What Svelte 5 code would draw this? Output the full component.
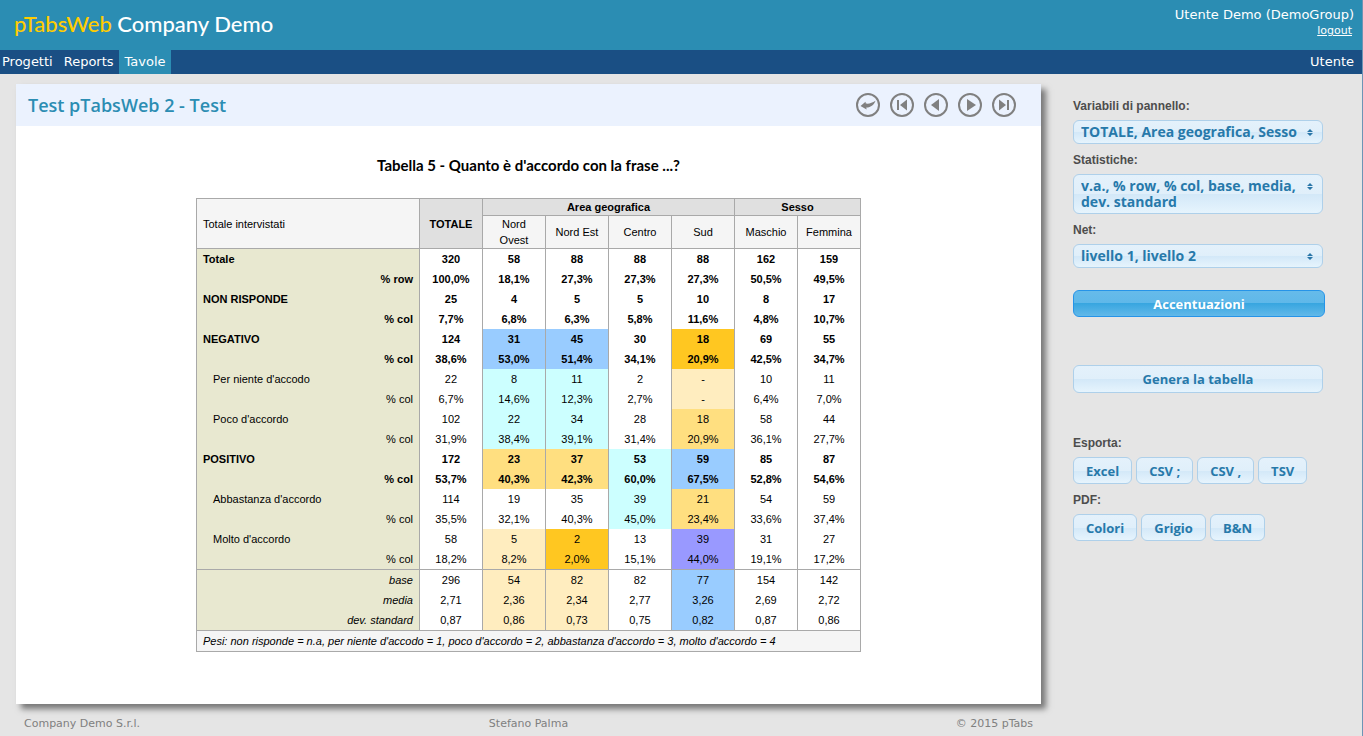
<script lang="ts">
  type Row = {
    label: string;
    kind?: 'net' | 'item' | 'stat' | 'statnet';
    cells: string[];
    tones?: string[];
  };

  const areas = ['Nord Ovest', 'Nord Est', 'Centro', 'Sud'];
  const sexes = ['Maschio', 'Femmina'];

  // One tone per column, '' where the value is not accentuated
  const negativo = ['', 'up2', 'up2', '', 'down3', '', ''];
  const niente = ['', 'up1', 'up1', '', 'down1', '', ''];
  const poco = ['', 'up1', 'up1', '', 'down2', '', ''];
  const positivo = ['', 'down2', 'down2', 'up1', 'up2', '', ''];
  const abbastanza = ['', '', '', 'up1', 'down2', '', ''];
  const molto = ['', 'down1', 'down3', '', 'up3', '', ''];
  const means = ['', 'down1', 'down1', '', 'up2', '', ''];

  const rows: Row[] = [
    { label: 'Totale', kind: 'net', cells: ['320', '58', '88', '88', '88', '162', '159'] },
    { label: '% row', kind: 'statnet', cells: ['100,0%', '18,1%', '27,3%', '27,3%', '27,3%', '50,5%', '49,5%'] },
    { label: 'NON RISPONDE', kind: 'net', cells: ['25', '4', '5', '5', '10', '8', '17'] },
    { label: '% col', kind: 'statnet', cells: ['7,7%', '6,8%', '6,3%', '5,8%', '11,6%', '4,8%', '10,7%'] },
    { label: 'NEGATIVO', kind: 'net', cells: ['124', '31', '45', '30', '18', '69', '55'], tones: negativo },
    { label: '% col', kind: 'statnet', cells: ['38,6%', '53,0%', '51,4%', '34,1%', '20,9%', '42,5%', '34,7%'], tones: negativo },
    { label: "Per niente d'accodo", kind: 'item', cells: ['22', '8', '11', '2', '-', '10', '11'], tones: niente },
    { label: '% col', kind: 'stat', cells: ['6,7%', '14,6%', '12,3%', '2,7%', '-', '6,4%', '7,0%'], tones: niente },
    { label: "Poco d'accordo", kind: 'item', cells: ['102', '22', '34', '28', '18', '58', '44'], tones: poco },
    { label: '% col', kind: 'stat', cells: ['31,9%', '38,4%', '39,1%', '31,4%', '20,9%', '36,1%', '27,7%'], tones: poco },
    { label: 'POSITIVO', kind: 'net', cells: ['172', '23', '37', '53', '59', '85', '87'], tones: positivo },
    { label: '% col', kind: 'statnet', cells: ['53,7%', '40,3%', '42,3%', '60,0%', '67,5%', '52,8%', '54,6%'], tones: positivo },
    { label: "Abbastanza d'accordo", kind: 'item', cells: ['114', '19', '35', '39', '21', '54', '59'], tones: abbastanza },
    { label: '% col', kind: 'stat', cells: ['35,5%', '32,1%', '40,3%', '45,0%', '23,4%', '33,6%', '37,4%'], tones: abbastanza },
    { label: "Molto d'accordo", kind: 'item', cells: ['58', '5', '2', '13', '39', '31', '27'], tones: molto },
    { label: '% col', kind: 'stat', cells: ['18,2%', '8,2%', '2,0%', '15,1%', '44,0%', '19,1%', '17,2%'], tones: molto }
  ];

  const summary: Row[] = [
    { label: 'base', cells: ['296', '54', '82', '82', '77', '154', '142'], tones: means },
    { label: 'media', cells: ['2,71', '2,36', '2,34', '2,77', '3,26', '2,69', '2,72'], tones: means },
    { label: 'dev. standard', cells: ['0,87', '0,86', '0,73', '0,75', '0,82', '0,87', '0,86'], tones: means }
  ];

  const pager = [
    { label: 'Indietro', d: 'M4.5 13 L9.5 8.7 L9.8 10.5 C13 11 16 10 19.5 7.8 C18.5 11.5 15 14.5 10.3 14.6 L10.6 16.4 Z' },
    { label: 'Prima tavola', d: 'M7 7h2v10h-2z M17 6.5v11l-7-5.5z' },
    { label: 'Tavola precedente', d: 'M15 6v12l-8-6z' },
    { label: 'Tavola successiva', d: 'M9 6v12l9-6z' },
    { label: 'Ultima tavola', d: 'M15 7h2v10h-2z M7 6.5v11l7-5.5z' }
  ];

  const pickers = [
    { id: 'panel-vars', label: 'Variabili di pannello:', value: 'TOTALE, Area geografica, Sesso' },
    { id: 'stats', label: 'Statistiche:', value: 'v.a., % row, % col, base, media, dev. standard' },
    { id: 'net', label: 'Net:', value: 'livello 1, livello 2' }
  ];
</script>

<div class="page">
  <header class="banner">
    <h1><span class="brand">pTabsWeb</span> Company Demo</h1>
    <div class="user">
      <span>Utente Demo (DemoGroup)</span>
      <a href="#logout">logout</a>
    </div>
  </header>

  <nav class="menu">
    <a href="#progetti">Progetti</a>
    <a href="#reports">Reports</a>
    <a href="#tavole" class="active" aria-current="page">Tavole</a>
    <a href="#utente" class="right">Utente</a>
  </nav>

  <div class="columns">
    <div class="content">
      <main class="sheet">
        <div class="sheet-head">
          <h2>Test pTabsWeb 2 - Test</h2>
          <div class="pager">
            {#each pager as p}
              <button type="button" aria-label={p.label}>
                <svg viewBox="0 0 24 24" width="24" height="24" fill="#808080">
                  <circle cx="12" cy="12" r="11" fill="none" stroke="#808080" stroke-width="2" />
                  <path d={p.d} />
                </svg>
              </button>
            {/each}
          </div>
        </div>

        <h3>Tabella 5 - Quanto è d'accordo con la frase ...?</h3>

        {#snippet line(row: Row)}
          <tr class={row.kind}>
            <th scope="row">{row.label}</th>
            {#each row.cells as cell, i}
              <td class={row.tones?.[i]}>{cell}</td>
            {/each}
          </tr>
        {/snippet}

        <table>
          <colgroup>
            <col class="label-col" />
            <col span="7" class="value-col" />
          </colgroup>
          <thead>
            <tr>
              <th rowspan="2" class="corner">Totale intervistati</th>
              <th rowspan="2" class="group">TOTALE</th>
              <th colspan="4" class="group">Area geografica</th>
              <th colspan="2" class="group">Sesso</th>
            </tr>
            <tr>
              {#each [...areas, ...sexes] as name}
                <th>{name}</th>
              {/each}
            </tr>
          </thead>
          <tbody>
            {#each rows as row}
              {@render line(row)}
            {/each}
          </tbody>
          <tbody class="summary">
            {#each summary as row}
              {@render line(row)}
            {/each}
          </tbody>
          <tfoot>
            <tr>
              <td colspan="8">Pesi: non risponde = n.a, per niente d'accodo = 1, poco d'accordo = 2, abbastanza d'accordo = 3, molto d'accordo = 4</td>
            </tr>
          </tfoot>
        </table>
      </main>

      <footer>
        <span>Company Demo S.r.l.</span>
        <span>Stefano Palma</span>
        <span>© 2015 pTabs</span>
      </footer>
    </div>

    <aside>
      {#each pickers as p}
        <label for={p.id}>{p.label}</label>
        <div class="picker">
          <select id={p.id}>
            <option>{p.value}</option>
          </select>
          <svg viewBox="0 0 6 7" width="6" height="7" fill="#2a76a8" aria-hidden="true">
            <path d="M3 0 L6 3 H0 Z M0 4 H6 L3 7 Z" />
          </svg>
        </div>
      {/each}

      <button type="button" class="btn primary">Accentuazioni</button>
      <button type="button" class="btn wide">Genera la tabella</button>

      <p>Esporta:</p>
      <div class="row">
        <button type="button" class="btn">Excel</button>
        <button type="button" class="btn">CSV ;</button>
        <button type="button" class="btn">CSV ,</button>
        <button type="button" class="btn">TSV</button>
      </div>
      <p>PDF:</p>
      <div class="row">
        <button type="button" class="btn">Colori</button>
        <button type="button" class="btn">Grigio</button>
        <button type="button" class="btn">B&amp;N</button>
      </div>
    </aside>
  </div>
</div>

<style>
  :global(body) {
    margin: 0;
    background: #e5e5e5;
  }

  .page {
    box-sizing: border-box;
    min-height: 100vh;
    border-right: 1px solid #6d94b5;
    font-family: Verdana, 'DejaVu Sans', sans-serif;
    font-size: 13px;
  }

  h1,
  h2,
  h3,
  p {
    margin: 0;
  }

  .banner {
    display: flex;
    justify-content: space-between;
    height: 50px;
    background: #2b8db3;
    color: #fff;
  }

  h1 {
    padding-left: 14px;
    font: 500 22px/48px 'Trebuchet MS', Lato, sans-serif;
  }

  .brand {
    color: #fc0;
  }

  .user {
    display: flex;
    flex-direction: column;
    align-items: flex-end;
    padding: 6px 8px 0 0;
    line-height: 18px;
  }

  .user a {
    padding-right: 2px;
    color: #fff;
    font-size: 11px;
    line-height: 14px;
  }

  .menu {
    display: flex;
    height: 24px;
    background: #1a4f84;
    line-height: 24px;
  }

  .menu a {
    padding: 0 5px 0 6px;
    color: #fff;
    text-decoration: none;
  }

  .menu a:first-child {
    padding-left: 2px;
  }

  .menu .active {
    background: #2b8db3;
  }

  .menu .right {
    margin-left: auto;
    padding-right: 8px;
  }

  .columns {
    display: grid;
    grid-template-columns: minmax(0, 1fr) 252px;
    gap: 32px;
    padding: 10px 37px 0 16px;
  }

  .sheet {
    padding-bottom: 52px;
    background: #fff;
    box-shadow: 5px 5px 6px #777;
  }

  .sheet-head {
    display: flex;
    align-items: center;
    justify-content: space-between;
    height: 42px;
    padding: 0 25px 0 12px;
    background: #ebf2fe;
  }

  h2 {
    color: #2b8db3;
    font: 600 18px/40px 'Trebuchet MS', 'Open Sans', sans-serif;
  }

  .pager {
    display: flex;
    gap: 10px;
  }

  .pager button {
    display: block;
    padding: 0;
    border: none;
    background: none;
    cursor: pointer;
  }

  .pager svg {
    display: block;
  }

  h3 {
    padding: 29px 0 23px;
    text-align: center;
    font: 700 15px/20px 'Trebuchet MS', Lato, sans-serif;
  }

  table {
    width: 665px;
    margin: 0 auto;
    border: 1px solid #a9a9a9;
    border-collapse: collapse;
    table-layout: fixed;
    font: 11px/16px Arial, 'Liberation Sans', sans-serif;
  }

  .label-col {
    width: 223px;
  }

  .value-col {
    width: 63px;
  }

  th,
  td {
    padding: 2px 6px;
    border: solid #a9a9a9;
    border-width: 0 1px;
    font-weight: 400;
    text-align: center;
  }

  thead th {
    padding: 0 6px;
    border-width: 1px;
    background: #f5f5f5;
  }

  thead .corner {
    text-align: left;
  }

  thead .group {
    background: #e0e0e0;
    font-weight: 700;
  }

  tbody th {
    background: #e8e8d0;
    text-align: right;
  }

  .net th,
  .net td,
  .statnet th,
  .statnet td {
    font-weight: 700;
  }

  .net th,
  .item th {
    text-align: left;
  }

  .item th {
    padding-left: 16px;
  }

  .summary {
    border-top: 1px solid #a9a9a9;
  }

  .summary th,
  tfoot td {
    font-style: italic;
  }

  tfoot td {
    border-width: 1px;
    background: #f5f5f5;
    text-align: left;
  }

  /* Accentuation scale: blues above the total, ambers below it */
  .up1 {
    background: #cff;
  }

  .up2 {
    background: #9cf;
  }

  .up3 {
    background: #99f;
  }

  .down1 {
    background: #ffedbf;
  }

  .down2 {
    background: #ffdf80;
  }

  .down3 {
    background: #ffc721;
  }

  footer {
    display: grid;
    grid-template-columns: 1fr auto 1fr;
    padding: 12px 8px 4px;
    color: #808080;
    font-size: 11px;
    line-height: 16px;
  }

  footer span:last-child {
    text-align: right;
  }

  aside {
    padding-top: 6px;
  }

  label,
  p {
    display: block;
    padding: 8px 0 6px;
    color: #4d4d4d;
    font: 700 12px/16px Arial, 'Liberation Sans', sans-serif;
  }

  .picker {
    position: relative;
    margin-right: 2px;
  }

  .picker svg {
    position: absolute;
    top: 9px;
    right: 10px;
    pointer-events: none;
  }

  select,
  .btn {
    box-sizing: border-box;
    border: 1px solid #aed0ea;
    border-radius: 6px;
    background: linear-gradient(#e4f1fb 0%, #e0effa 50%, #d3e8f8 51%, #e6f4fd 100%);
    color: #2779aa;
    font-family: 'Lucida Grande', 'Open Sans', sans-serif;
    font-weight: 700;
    cursor: pointer;
  }

  select {
    display: block;
    width: 100%;
    padding: 3px 20px 3px 7px;
    appearance: none;
    font-size: 14px;
    line-height: 16px;
    white-space: normal;
  }

  .btn {
    height: 27px;
    padding: 0 12px;
    font-size: 13px;
    line-height: 16px;
  }

  .primary {
    display: block;
    width: 100%;
    margin-top: 22px;
    border-color: #2694e8;
    background: linear-gradient(#66bbea 0%, #5fb8e9 48%, #38a6e0 50%, #62b9e9 100%);
    color: #fff;
  }

  .wide {
    display: block;
    width: 250px;
    height: 28px;
    margin: 48px 0 34px;
  }

  .row {
    display: flex;
    gap: 4px;
  }
</style>
